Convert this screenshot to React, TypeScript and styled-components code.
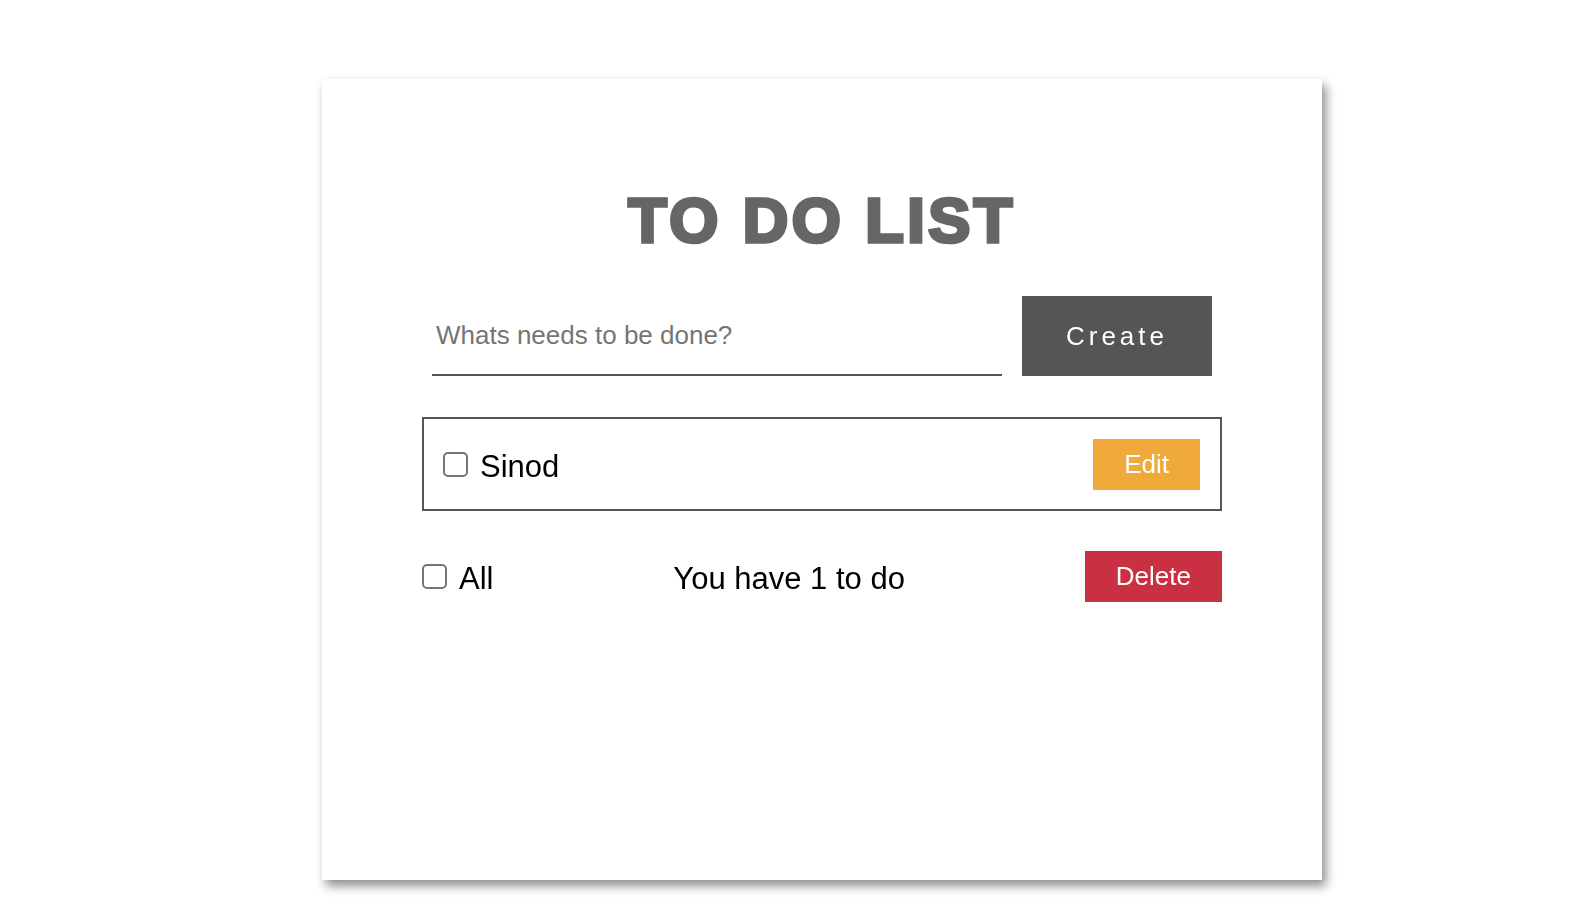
import React from 'react'
import styled, { createGlobalStyle } from 'styled-components'

const GlobalStyle = createGlobalStyle`
  body {
    margin: 0;
    background: #ffffff;
    font-family: "Liberation Sans", Arial, Helvetica, sans-serif;
  }
`

const Page = styled.div`
  padding: 79px 0 40px 322px;
`

const Card = styled.div`
  box-sizing: border-box;
  width: 1000px;
  height: 801px;
  padding: 110px 100px 0;
  background: #ffffff;
  box-shadow: 4px 6px 10px rgba(0, 0, 0, 0.45);
`

const Title = styled.h1`
  margin: 0;
  font-size: 63px;
  line-height: 1;
  font-weight: 900;
  letter-spacing: 3.5px;
  text-align: center;
  color: #666666;
  -webkit-text-stroke: 3.6px #666666;
`

const Form = styled.form`
  display: flex;
  gap: 20px;
  height: 80px;
  margin: 44px 10px 0;
`

const TextInput = styled.input`
  flex: 1;
  box-sizing: border-box;
  height: 80px;
  padding: 0 0 0 4px;
  border: none;
  border-bottom: 2px solid #555555;
  outline: none;
  font-family: inherit;
  font-size: 26px;
  color: #222222;
  caret-color: #000000;
  background: transparent;

  &::placeholder {
    color: #757575;
  }
`

const Button = styled.button<{ $bg: string; $spacing?: number }>`
  box-sizing: border-box;
  height: ${(p) => (p.$spacing ? 80 : 51)}px;
  padding: 0 ${(p) => (p.$spacing ? 0 : 31)}px;
  width: ${(p) => (p.$spacing ? '190px' : 'auto')};
  border: none;
  background: ${(p) => p.$bg};
  color: #ffffff;
  font-family: inherit;
  font-size: 26px;
  letter-spacing: ${(p) => p.$spacing ?? 0}px;
  cursor: pointer;
`

const TodoItem = styled.div`
  box-sizing: border-box;
  display: flex;
  align-items: center;
  justify-content: space-between;
  height: 94px;
  margin-top: 41px;
  padding: 0 20px 0 19px;
  border: 2px solid #555555;
`

const Label = styled.label`
  display: flex;
  align-items: center;
  gap: 12px;
  font-size: 31px;
  color: #000000;
`

const Text = styled.span`
  padding-top: 5px;
  font-size: 31px;
  color: #000000;
`

const Check = styled.input`
  appearance: none;
  box-sizing: border-box;
  width: 25px;
  height: 25px;
  margin: 0;
  border: 2px solid #767676;
  border-radius: 5px;
  background: #ffffff;
`

const Footer = styled.div`
  display: flex;
  align-items: center;
  justify-content: space-between;
  margin-top: 40px;
`

export default function App() {
  const [text, setText] = React.useState('')

  return (
    <>
      <GlobalStyle />
      <Page>
        <Card>
          <Title>TO DO LIST</Title>
          <Form onSubmit={(e) => e.preventDefault()}>
            <TextInput
              autoFocus
              value={text}
              onChange={(e) => setText(e.target.value)}
              placeholder="Whats needs to be done?"
            />
            <Button type="submit" $bg="#555555" $spacing={4}>
              Create
            </Button>
          </Form>
          <TodoItem>
            <Label>
              <Check type="checkbox" />
              <Text>Sinod</Text>
            </Label>
            <Button type="button" $bg="#f0aa3c">
              Edit
            </Button>
          </TodoItem>
          <Footer>
            <Label>
              <Check type="checkbox" />
              <Text>All</Text>
            </Label>
            <Text>You have 1 to do</Text>
            <Button type="button" $bg="#c93142">
              Delete
            </Button>
          </Footer>
        </Card>
      </Page>
    </>
  )
}
